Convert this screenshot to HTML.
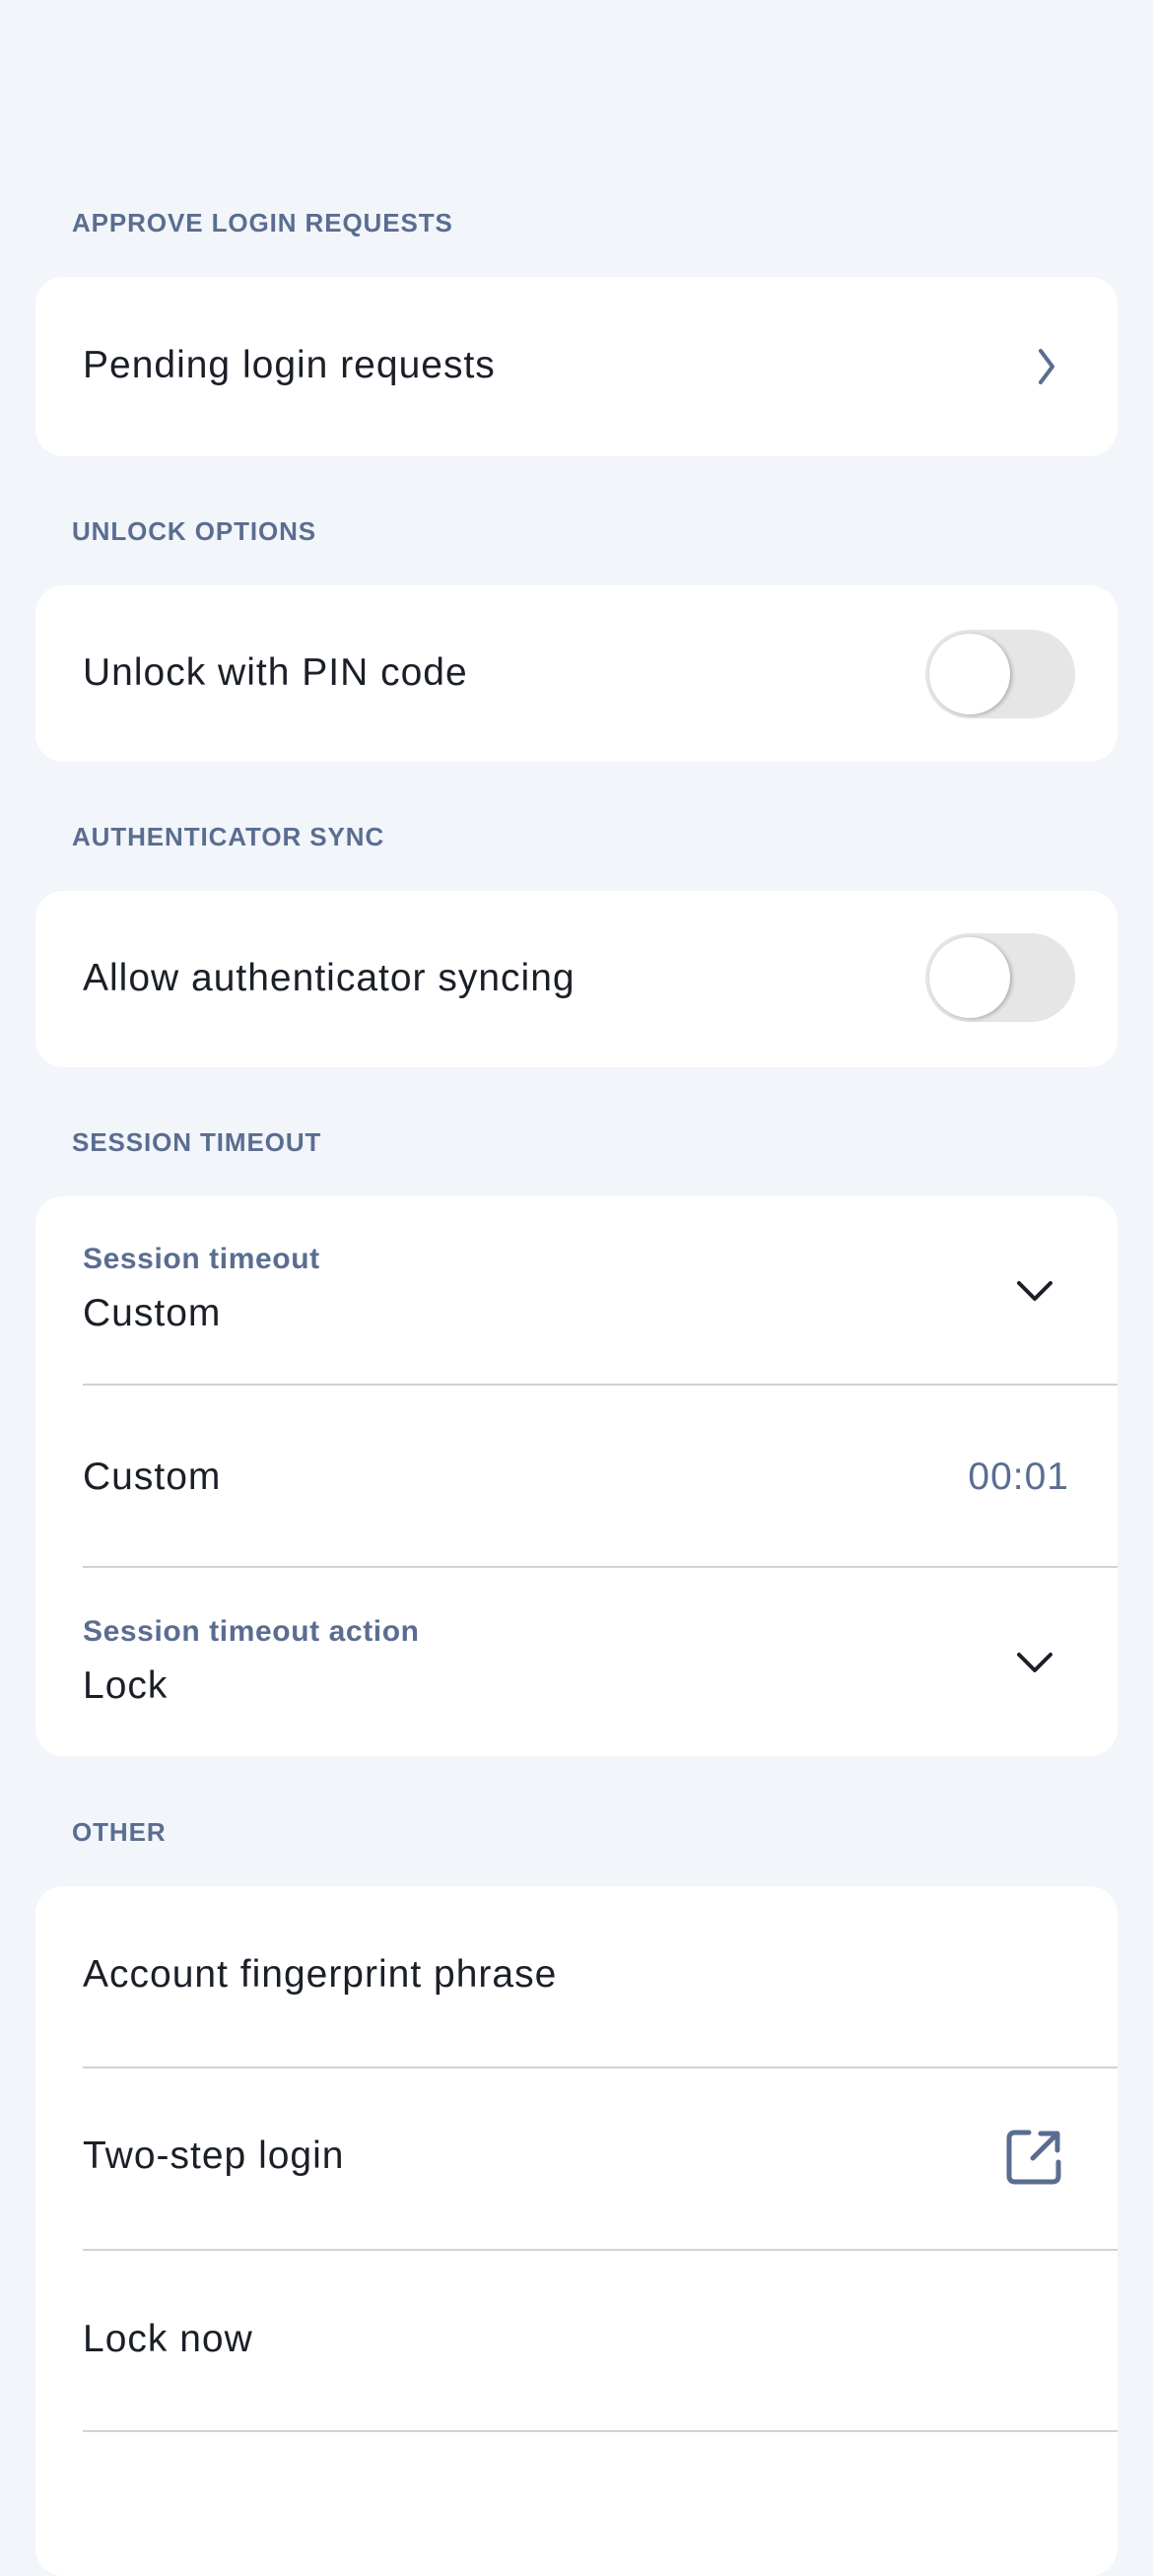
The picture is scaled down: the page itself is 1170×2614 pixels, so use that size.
<!DOCTYPE html>
<html><head><meta charset="utf-8"><style>
*{margin:0;padding:0;box-sizing:border-box}
body{width:1170px;height:2532px;background:#f2f5f9;font-family:"Liberation Sans",sans-serif;position:relative;overflow:hidden;color:#1b1f27}
.h{position:absolute;left:73px;font-size:26px;font-weight:bold;color:#5a6d91;letter-spacing:0.9px;line-height:30px}
.card{position:absolute;left:36px;width:1098px;background:#fff;border-radius:28px}
.t{position:absolute;left:84px;font-size:39px;line-height:44px;color:#1b1f27;letter-spacing:1px}
.lab{position:absolute;left:84px;font-size:30px;font-weight:bold;color:#5a6d91;line-height:34px;letter-spacing:0.6px}
.div{position:absolute;left:48px;right:0;height:2px;background:#d2d2d4}
.tog{position:absolute;left:939px;width:152px;height:90px;border-radius:45px;background:#e6e6e6}
.tog::after{content:"";position:absolute;left:4px;top:4px;width:82px;height:82px;border-radius:50%;background:#fff;box-shadow:2px 1px 4px rgba(0,0,0,.25)}
svg{position:absolute}
</style></head><body>
<div class="h" style="top:211px">APPROVE LOGIN REQUESTS</div>
<div class="card" style="top:281px;height:182px"></div>
<div class="t" style="top:349px">Pending login requests</div>
<svg style="left:1048px;top:352px" width="28" height="40" viewBox="0 0 28 40"><path d="M8 4 L20 20 L8 36" fill="none" stroke="#5a6d91" stroke-width="4" stroke-linecap="round" stroke-linejoin="round"/></svg>

<div class="h" style="top:524px">UNLOCK OPTIONS</div>
<div class="card" style="top:594px;height:179px"></div>
<div class="t" style="top:661px">Unlock with PIN code</div>
<div class="tog" style="top:639px"></div>

<div class="h" style="top:834px">AUTHENTICATOR SYNC</div>
<div class="card" style="top:904px;height:179px"></div>
<div class="t" style="top:971px">Allow authenticator syncing</div>
<div class="tog" style="top:947px"></div>

<div class="h" style="top:1144px">SESSION TIMEOUT</div>
<div class="card" style="top:1214px;height:568px">
  <div class="div" style="top:190px"></div>
  <div class="div" style="top:375px"></div>
</div>
<div class="lab" style="top:1261px">Session timeout</div>
<div class="t" style="top:1311px">Custom</div>
<svg style="left:1030px;top:1296px" width="40" height="28" viewBox="0 0 40 28"><path d="M4 6 L20 22 L36 6" fill="none" stroke="#1b1f27" stroke-width="4" stroke-linecap="round" stroke-linejoin="round"/></svg>
<div class="t" style="top:1477px">Custom</div>
<div class="t" style="left:auto;right:85px;top:1477px;color:#5a6d91">00:01</div>
<div class="lab" style="top:1639px">Session timeout action</div>
<div class="t" style="top:1689px">Lock</div>
<svg style="left:1030px;top:1673px" width="40" height="28" viewBox="0 0 40 28"><path d="M4 6 L20 22 L36 6" fill="none" stroke="#1b1f27" stroke-width="4" stroke-linecap="round" stroke-linejoin="round"/></svg>

<div class="h" style="top:1844px">OTHER</div>
<div class="card" style="top:1914px;height:700px">
  <div class="div" style="top:183px"></div>
  <div class="div" style="top:368px"></div>
  <div class="div" style="top:552px"></div>
</div>
<div class="t" style="top:1982px">Account fingerprint phrase</div>
<div class="t" style="top:2166px">Two-step login</div>
<svg style="left:1020px;top:2160px" width="58" height="58" viewBox="0 0 58 58"><path d="M24 4 H10 Q4 4 4 10 V48 Q4 54 10 54 H48 Q54 54 54 48 V34" fill="none" stroke="#5a6d91" stroke-width="5" stroke-linecap="round"/><path d="M28 30 L52 6 M36 5 H53 V22" fill="none" stroke="#5a6d91" stroke-width="5" stroke-linecap="round" stroke-linejoin="round"/></svg>
<div class="t" style="top:2352px">Lock now</div>
</body></html>
